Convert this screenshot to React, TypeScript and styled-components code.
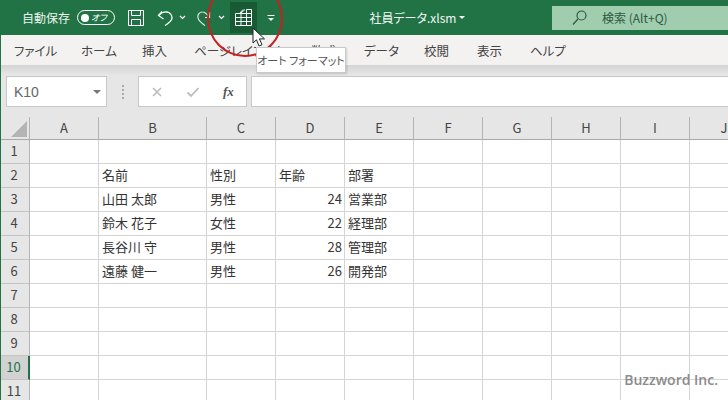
import React from "react";
import styled, { createGlobalStyle } from "styled-components";

const Global = createGlobalStyle`
  html, body { margin: 0; padding: 0; width: 728px; height: 400px; overflow: hidden; background: #fff; }
  body { font-family: "Noto Sans CJK JP", "Liberation Sans", sans-serif; }
`;

const Page = styled.div`
  position: relative;
  width: 728px;
  height: 400px;
  overflow: hidden;
  display: flex;
  flex-direction: column;
  border-left: 1px solid #217346;
  box-sizing: border-box;
`;

const TitleBar = styled.header`
  height: 35px;
  flex: none;
  margin-left: -1px;
  background: #217346;
  display: flex;
  align-items: center;
  color: #fff;
  font-size: 12px;
`;

const AutoSave = styled.span`
  margin-left: 22px;
  width: 55px;
  font-size: 12px;
  line-height: 1;
  color: #eef5f0;
`;

const Toggle = styled.span`
  width: 38px;
  height: 15px;
  box-sizing: border-box;
  border: 1px solid #fff;
  border-radius: 8px;
  display: flex;
  align-items: center;
  padding: 0 7px 0 3px;
  justify-content: space-between;
  font-size: 9px;
  font-style: italic;
  font-feature-settings: "palt";
  line-height: 1;
`;

const Knob = styled.span`
  width: 8px;
  height: 8px;
  border-radius: 50%;
  background: #fff;
`;

const QatIcon = styled.svg<{ $ml: number }>`
  flex: none;
  margin-left: ${(p) => p.$ml}px;
  fill: none;
  stroke: #fff;
  display: block;
`;

const SearchIcon = styled(QatIcon)`
  stroke: #2c5a41;
`;

const HoverButton = styled.span`
  margin-left: 5px;
  width: 28px;
  height: 31px;
  background: #185a34;
  display: flex;
  align-items: center;
  justify-content: center;
`;

const FileName = styled.span`
  margin-left: 94px;
  width: 90px;
  font-size: 12px;
  font-feature-settings: "palt";
  color: #f3f8f5;
  white-space: nowrap;
`;

const TitleCaret = styled.span`
  width: 0;
  height: 0;
  border-left: 3px solid transparent;
  border-right: 3px solid transparent;
  border-top: 3px solid #fff;
`;

const SearchBox = styled.div`
  margin-left: 87px;
  width: 176px;
  height: 24px;
  flex: none;
  background: #a0cdae;
  display: flex;
  align-items: center;
  color: #2c5a41;
  font-size: 12px;
  white-space: nowrap;
`;

const SearchLabel = styled.span`
  margin-left: 15px;
`;

const TabBar = styled.nav`
  height: 30px;
  flex: none;
  background: #f3f2f1;
  display: flex;
  align-items: center;
  font-size: 12.5px;
  font-feature-settings: "palt";
  color: #444;
`;

const Tab = styled.span<{ $w: number; $first?: boolean }>`
  flex: none;
  width: ${(p) => p.$w}px;
  margin-left: ${(p) => (p.$first ? 13 : 0)}px;
  white-space: nowrap;
`;

const FormulaArea = styled.div`
  height: 52px;
  flex: none;
  box-sizing: border-box;
  padding: 11px 0 10px 5px;
  background: linear-gradient(#d4d4d4 0, #e6e6e6 10px);
  display: flex;
  align-items: stretch;
`;

const NameBox = styled.div`
  width: 101px;
  box-sizing: border-box;
  background: #fff;
  border: 1px solid #c8c8c8;
  display: flex;
  align-items: center;
  justify-content: space-between;
  padding: 0 5px 0 7px;
  color: #666;
  font-family: "Liberation Sans", sans-serif;
  font-size: 14px;
`;

const Caret = styled.span`
  width: 0;
  height: 0;
  border-left: 4px solid transparent;
  border-right: 4px solid transparent;
  border-top: 4px solid #777;
`;

const Dots = styled.span`
  width: 31px;
  flex: none;
  display: flex;
  flex-direction: column;
  align-items: center;
  justify-content: center;
  gap: 2px;
`;

const Dot = styled.i`
  width: 2px;
  height: 2px;
  background: #aaa;
`;

const FxBox = styled.div`
  width: 109px;
  flex: none;
  box-sizing: border-box;
  background: #fff;
  border: 1px solid #c8c8c8;
  display: flex;
  align-items: center;
  padding-left: 12px;
  gap: 23px;
`;

const Fx = styled.span`
  font-family: "Liberation Serif", serif;
  font-style: italic;
  font-weight: 700;
  font-size: 13px;
  color: #555;
`;

const FormulaInput = styled.div`
  flex: 1;
  margin-left: 4px;
  background: #fff;
  border: 1px solid #c8c8c8;
  border-right: none;
`;

const SheetClip = styled.div`
  flex: 1;
  overflow: hidden;
  background: #fff;
`;

const Sheet = styled.div`
  display: grid;
  width: 758px;
  grid-template-columns: 29px 69px 108px repeat(8, 69px);
  grid-auto-rows: 24px;
  grid-template-rows: 23px;
  font-size: 13px;
`;

const ColHead = styled.div`
  background: #e6e6e6;
  border-right: 1px solid #b4b4b4;
  border-bottom: 1px solid #a8a8a8;
  box-sizing: border-box;
  display: flex;
  align-items: center;
  justify-content: center;
  padding-bottom: 2px;
  color: #444;
`;

const Corner = styled(ColHead)`
  align-items: flex-end;
  justify-content: flex-end;
  padding: 0 2px 2px 0;
`;

const RowHead = styled.div<{ $active?: boolean }>`
  background: ${(p) => (p.$active ? "#d2d2d2" : "#e6e6e6")};
  color: ${(p) => (p.$active ? "#217346" : "#444")};
  border-right: ${(p) => (p.$active ? "2px solid #217346" : "1px solid #b4b4b4")};
  border-bottom: 1px solid #c4c4c4;
  box-sizing: border-box;
  display: flex;
  align-items: center;
  justify-content: center;
  padding: 0 2px 2px 0;
`;

const Cell = styled.div<{ $right?: boolean }>`
  border-right: 1px solid #d4d4d4;
  border-bottom: 1px solid #d4d4d4;
  box-sizing: border-box;
  display: flex;
  align-items: center;
  justify-content: ${(p) => (p.$right ? "flex-end" : "flex-start")};
  padding: 0 2px 3px 3px;
  color: #333;
  white-space: nowrap;
  line-height: 1;
`;

const Ring = styled.div`
  position: absolute;
  left: 206px;
  top: -20px;
  width: 76px;
  height: 77px;
  box-sizing: border-box;
  border: 2.5px solid #c5211f;
  border-radius: 50%;
`;

const Tooltip = styled.div`
  position: absolute;
  left: 255px;
  top: 47px;
  width: 90px;
  height: 26px;
  box-sizing: border-box;
  background: #fff;
  border: 1px solid #c9c9c9;
  box-shadow: 1px 1px 2px rgba(0, 0, 0, 0.15);
  display: flex;
  align-items: center;
  justify-content: center;
  font-size: 11px;
  font-feature-settings: "palt";
  color: #555;
  white-space: nowrap;
`;

const Pointer = styled.svg`
  position: absolute;
  left: 251px;
  top: 27px;
`;

const Watermark = styled.div`
  position: absolute;
  right: 10px;
  bottom: 11px;
  font-family: "Open Sans", "Liberation Sans", sans-serif;
  font-size: 14px;
  font-weight: 600;
  color: #808080;
  opacity: 0.9;
`;

const columns = ["A", "B", "C", "D", "E", "F", "G", "H", "I", "J"];
const data: Record<number, string[]> = {
  2: ["名前", "性別", "年齢", "部署"],
  3: ["山田 太郎", "男性", "24", "営業部"],
  4: ["鈴木 花子", "女性", "22", "経理部"],
  5: ["長谷川 守", "男性", "28", "管理部"],
  6: ["遠藤 健一", "男性", "26", "開発部"],
};
const tabs: [string, number][] = [
  ["ファイル", 67],
  ["ホーム", 61],
  ["挿入", 52],
  ["ページレイアウト", 117],
  ["数式", 53],
  ["データ", 60],
  ["校閲", 53],
  ["表示", 53],
  ["ヘルプ", 40],
];

const Chevron = ({ ml }: { ml: number }) => (
  <QatIcon $ml={ml} width="7" height="5" viewBox="0 0 7 5" strokeWidth="1.2">
    <path d="M1 1l2.5 2.5L6 1" />
  </QatIcon>
);

export default function App() {
  return (
    <Page>
      <Global />
      <TitleBar>
        <AutoSave>自動保存</AutoSave>
        <Toggle>
          <Knob />
          オフ
        </Toggle>
        <QatIcon $ml={13} width="16" height="16" viewBox="0 0 16 16" strokeWidth="1">
          <path d="M.5.5h15v15H.5z" />
          <path d="M3.5.5v5h9v-5M3.5 15.5v-6h9v6" />
        </QatIcon>
        <QatIcon $ml={13} width="16" height="16" viewBox="0 0 16 16" strokeWidth="1.3">
          <path d="M5 1.5L1.5 5.5 6.5 9" />
          <path d="M1.5 5.5C4 3 7 1.5 10 2A6 6 0 0 1 15 8C15 11 11 13.5 8 15.5" />
        </QatIcon>
        <Chevron ml={6} />
        <QatIcon $ml={11} width="16" height="16" viewBox="0 0 16 16" strokeWidth="1.2" opacity="0.85">
          <path d="M8 15.5C5 13 1 11 1 7.5A4.5 4.5 0 0 1 5.5 2C8 2 10 4 12 7" />
          <path d="M12.5 2v5.5H8" />
        </QatIcon>
        <Chevron ml={5} />
        <HoverButton>
          <QatIcon $ml={0} width="17" height="17" viewBox="0 0 17 17" strokeWidth="1">
            <path d="M.5 4.5h16v12H.5zM.5 8.5h16M.5 12.5h16M6 4.5v12M11.5 4.5v12" />
            <path d="M11.5 4.5v-4h5v4M5 4l3-3.5M6 4l4-3.5" />
          </QatIcon>
        </HoverButton>
        <QatIcon $ml={10} width="8" height="8" viewBox="0 0 8 8" strokeWidth="1">
          <path d="M.5 1.5h7" />
          <path d="M1 4h6L4 7z" fill="#fff" stroke="none" />
        </QatIcon>
        <FileName>社員データ.xlsm</FileName>
        <TitleCaret />
        <SearchBox>
          <SearchIcon $ml={20} width="15" height="15" viewBox="0 0 15 15" strokeWidth="1.2">
            <circle cx="9.5" cy="5.5" r="4.5" />
            <path d="M6 9l-5 5.5" />
          </SearchIcon>
          <SearchLabel>検索 (Alt+Q)</SearchLabel>
        </SearchBox>
      </TitleBar>
      <TabBar>
        {tabs.map(([label, width], i) => (
          <Tab key={label} $w={width} $first={i === 0}>
            {label}
          </Tab>
        ))}
      </TabBar>
      <FormulaArea>
        <NameBox>
          K10
          <Caret />
        </NameBox>
        <Dots>
          <Dot />
          <Dot />
          <Dot />
          <Dot />
        </Dots>
        <FxBox>
          <svg width="12" height="12" viewBox="0 0 12 12" fill="none" stroke="#bdbdbd" strokeWidth="1.6">
            <path d="M2 2l8 8M10 2l-8 8" />
          </svg>
          <svg width="14" height="12" viewBox="0 0 14 12" fill="none" stroke="#bdbdbd" strokeWidth="1.8">
            <path d="M1.5 6.5l3.5 3.5 7.5-8" />
          </svg>
          <Fx>fx</Fx>
        </FxBox>
        <FormulaInput />
      </FormulaArea>
      <SheetClip>
        <Sheet>
          <Corner>
            <svg width="16" height="16" viewBox="0 0 16 16">
              <path d="M16 0v16H0z" fill="#b4b4b4" />
            </svg>
          </Corner>
          {columns.map((c) => (
            <ColHead key={c}>{c}</ColHead>
          ))}
          {Array.from({ length: 11 }, (_, r) => {
            const row = r + 1;
            const values = data[row];
            return (
              <React.Fragment key={row}>
                <RowHead $active={row === 10}>{row}</RowHead>
                {columns.map((c, i) => {
                  const value = values && i >= 1 && i <= 4 ? values[i - 1] : "";
                  return (
                    <Cell key={c} $right={i === 3 && row > 2}>
                      {value}
                    </Cell>
                  );
                })}
              </React.Fragment>
            );
          })}
        </Sheet>
      </SheetClip>
      <Ring />
      <Tooltip>オート フォーマット</Tooltip>
      <Pointer width="14" height="21" viewBox="0 0 14 21">
        <path d="M1 1v15l3.5-3.2L7 19l3-1.3-2.6-5.8H12.5z" fill="#fff" stroke="#222" strokeWidth="1" />
      </Pointer>
      <Watermark>Buzzword Inc.</Watermark>
    </Page>
  );
}
